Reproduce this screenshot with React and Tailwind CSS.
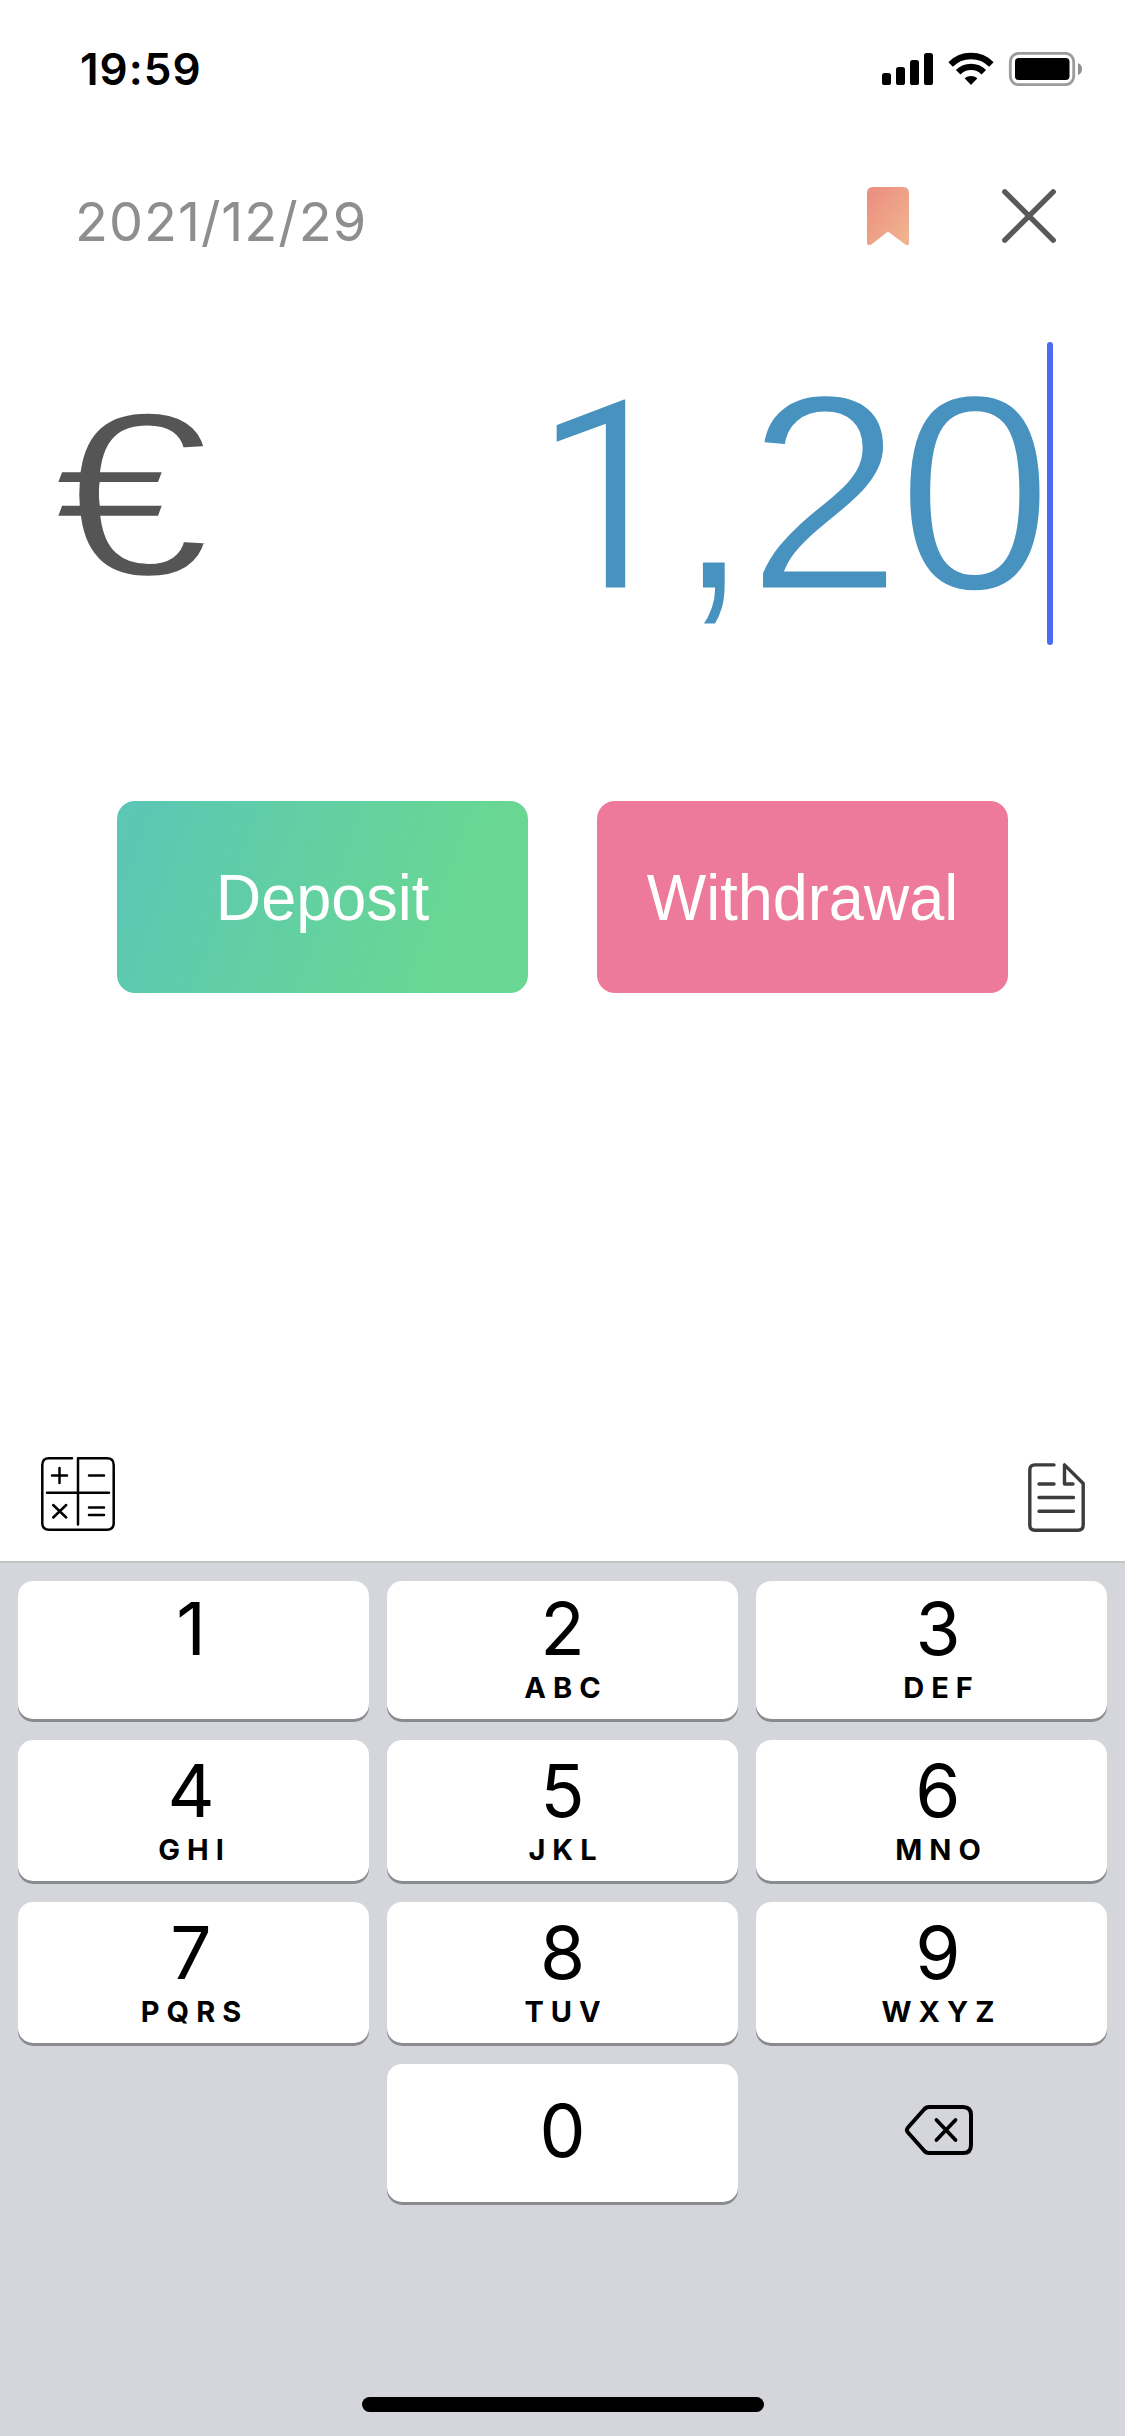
import React from "react";

const inter = "font-['Inter','Liberation_Sans',sans-serif]";
const helvetica = "font-['Liberation_Sans',Arial,sans-serif]";

function StatusBar() {
  return (
    <div className="flex h-[138px] items-center justify-between pl-[80px] pr-[43px]">
      <span className={`${inter} text-[44px] leading-[54px] font-semibold tracking-[1px] text-black`}>19:59</span>
      <svg width="200" height="34" viewBox="0 0 200 34">
        <rect x="0" y="21" width="9" height="12" rx="2.6" />
        <rect x="14" y="15" width="9" height="18" rx="2.6" />
        <rect x="28" y="8" width="9" height="25" rx="2.6" />
        <rect x="42" y="1" width="9" height="32" rx="2.6" />
        <g fill="none" stroke="#000" strokeWidth="6.4">
          <path d="M68.600 12.400A29 29 0 0 1 109.400 12.400" />
          <path d="M76.200 20.200A18 18 0 0 1 101.800 20.200" />
        </g>
        <path d="M82.600 26.200A10 10 0 0 1 95.400 26.200L89 33Z" />
        <rect x="128.300" y="1.300" width="63.400" height="31.400" rx="8.500" fill="none" stroke="#9b9b9b" strokeWidth="2.800" />
        <rect x="133" y="6" width="54.500" height="22" rx="3.800" />
        <path d="M196 11Q200 12.500 200 17Q200 21.500 196 23Z" fill="#8f8f8f" />
      </svg>
    </div>
  );
}

function Header() {
  return (
    <div className="flex h-[166px] justify-between pl-[75px] pr-[69px]">
      <span className={`${inter} mt-[51px] h-[66px] text-[54px] leading-[66px] font-normal tracking-[1px] text-[#8e8e8e]`}>2021/12/29</span>
      <div className="mt-[48px] flex gap-[93px]">
        <svg width="42" height="60" viewBox="0 0 42 60">
          <defs>
            <linearGradient id="ribbon" x1="0" y1="0" x2="1" y2="1">
              <stop offset="0.1" stopColor="#ec9080" />
              <stop offset="0.9" stopColor="#f0b28f" />
            </linearGradient>
          </defs>
          <path d="M0 7Q0 1 6 1H36Q42 1 42 7V57Q42 60 39 59L21 45.500L4 58.800Q0 60 0 57Z" fill="url(#ribbon)" />
        </svg>
        <svg width="54" height="60" viewBox="0 0 54 60">
          <path d="M2.800 5.800L51.200 54.200M51.200 5.800L2.800 54.200" stroke="#595959" strokeWidth="5.400" strokeLinecap="round" />
        </svg>
      </div>
    </div>
  );
}

function Amount() {
  return (
    <div className="mt-[38px] flex h-[303px] items-start justify-between pl-[52px] pr-[72px]">
      <span className={`${helvetica} origin-left scale-x-[1.215] text-[236px] leading-[305px] text-[#555555] [-webkit-text-stroke:5px_white]`}>€</span>
      <div className="flex h-full items-start">
        <span className={`${helvetica} text-[281px] leading-[302px] tracking-[-6px] whitespace-nowrap text-[#4792be] [-webkit-text-stroke:5px_white]`}>
          <span className="font-['Roboto',sans-serif] text-[270px] leading-none tracking-[-9px]">1</span>,20
        </span>
        <span className="h-full w-[6px] rounded-full bg-[#4a6cf0]" />
      </div>
    </div>
  );
}

function Actions() {
  return (
    <div className={`${helvetica} mt-[156px] flex gap-[69px] px-[117px] text-[63px] leading-[192px] text-white`}>
      <button className="h-[192px] w-[411px] rounded-[18px] bg-[linear-gradient(110deg,#5bc7b4_4%,#69d793_80%)] text-center">
        <span className="inline-block scale-y-[1.04]">Deposit</span>
      </button>
      <button className="h-[192px] w-[411px] rounded-[18px] bg-[#ed7a9a] text-center">
        <span className="inline-block scale-y-[1.04]">Withdrawal</span>
      </button>
    </div>
  );
}

function Toolbar() {
  return (
    <div className="mt-[464px] flex h-[104px] justify-between pl-[41px] pr-[40px]">
      <svg width="74" height="74" viewBox="0 0 74 74" fill="none" stroke="#000" strokeWidth="2.500" strokeLinecap="round" strokeLinejoin="round">
        <path d="M31 1.300H8Q1.300 1.300 1.300 8V66Q1.300 72.700 8 72.700H66Q72.700 72.700 72.700 66V8Q72.700 1.300 66 1.300H37V67.500M6 35.700H68" />
        <path d="M11 18.500H26M18.500 11V26M48 18.500H63M12.200 48L25.200 60.500M25.200 48L12.200 60.500M48 50.500H63M48 58H63" />
      </svg>
      <svg className="mt-[5px]" width="57" height="72" viewBox="0 0 57 72" fill="none" stroke="#3c3c3c" strokeWidth="3.400" strokeLinecap="round" strokeLinejoin="round">
        <path d="M26 2.900H7Q1.800 2.900 1.800 8V63Q1.800 68.200 7 68.200H50Q55.200 68.200 55.200 63V21.500L36.500 2.900V22H45M11 22H26M11 35.500H45.500M11 49.300H45.500" />
      </svg>
    </div>
  );
}

const rows = [
  [["1", ""], ["2", "ABC"], ["3", "DEF"]],
  [["4", "GHI"], ["5", "JKL"], ["6", "MNO"]],
  [["7", "PQRS"], ["8", "TUV"], ["9", "WXYZ"]],
];
const rowStyles = ["h-[138px] pt-[11px]", "h-[141px] pt-[14px]", "h-[141px] pt-[14px]"];
const columnStyles = ["pr-[5px]", "", "pl-[13px]"];
const keyBase = "flex flex-col items-center rounded-[15px] bg-white shadow-[0_3px_0_#8a8b8f]";

function Keypad() {
  return (
    <div className={`${inter} flex grow flex-col border-t-2 border-[#c3c4c4] bg-[#d5d6dc] px-[18px] pt-[18px] text-black`}>
      <div className="grid grid-cols-3 gap-x-[18px] gap-y-[21px]">
        {rows.map((row, r) =>
          row.map(([digit, letters], c) => (
            <button key={digit} className={`${keyBase} ${rowStyles[r]} ${columnStyles[c]}`}>
              <span className="text-[73px] leading-[74px]">{digit}</span>
              {letters && (
                <span className="mt-[4px] pl-[7px] text-[29px] leading-[36px] font-bold tracking-[7px]">{letters}</span>
              )}
            </button>
          ))
        )}
        <button className={`${keyBase} col-start-2 h-[138px] pt-[30px]`}>
          <span className="text-[73px] leading-[74px]">0</span>
        </button>
        <button className="flex items-center justify-center pl-[15px] pb-[7px]">
          <svg width="70" height="52" viewBox="0 0 70 52" fill="none" stroke="#000" strokeWidth="4" strokeLinecap="round" strokeLinejoin="round">
            <path d="M25 3H59Q67 3 67 11V41Q67 49 59 49H25Q22 49 20 46.500L4 28.500Q1.800 26 4 23.500L20 5.500Q22 3 25 3Z" />
            <path d="M32.500 16L51.500 36M51.500 16L32.500 36" strokeWidth="3.800" />
          </svg>
        </button>
      </div>
      <div className="mt-auto mb-[24px] ml-[344px] h-[15px] w-[402px] rounded-full bg-black" />
    </div>
  );
}

export default function App() {
  return (
    <main className="flex h-[2436px] w-[1125px] flex-col overflow-hidden bg-white">
      <StatusBar />
      <Header />
      <Amount />
      <Actions />
      <Toolbar />
      <Keypad />
    </main>
  );
}
